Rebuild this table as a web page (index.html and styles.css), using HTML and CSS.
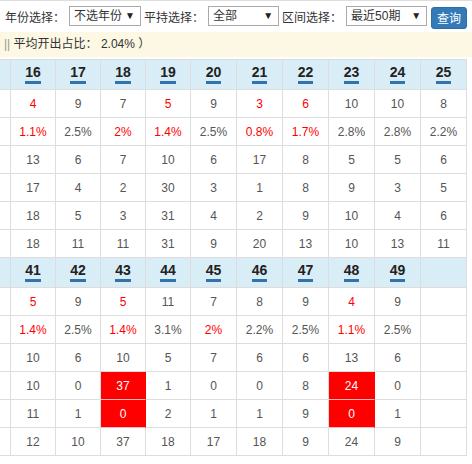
FILE: index.html
```html
<!DOCTYPE html>
<html lang="zh-CN">
<head>
    <meta charset="UTF-8">
    <meta name="viewport" content="width=device-width, initial-scale=1.0">
    <title>号码统计</title>
    <link rel="stylesheet" href="styles.css">
</head>
<body>
    <div class="page">
        <div class="toolbar">
            <label>年份选择：</label>
            <div class="select-wrap year">
                <select><option>不选年份</option></select>
                <span class="caret">▼</span>
            </div>
            <label>平持选择：</label>
            <div class="select-wrap type">
                <select><option>全部</option></select>
                <span class="caret">▼</span>
            </div>
            <label>区间选择：</label>
            <div class="select-wrap range">
                <select><option>最近50期</option></select>
                <span class="caret">▼</span>
            </div>
            <button class="btn-query">查询</button>
        </div>

        <div class="notice"><span class="bars">||</span> 平均开出占比： 2.04% ）</div>

        <div class="table-wrap">
            <table class="stats">
                <tbody>
                    <tr class="head">
                        <th class="c0"></th>
                        <th class="c45"><span class="num">16</span></th>
                        <th class="c45"><span class="num">17</span></th>
                        <th class="c45"><span class="num">18</span></th>
                        <th class="c45"><span class="num">19</span></th>
                        <th class="c46"><span class="num">20</span></th>
                        <th class="c46"><span class="num">21</span></th>
                        <th class="c46"><span class="num">22</span></th>
                        <th class="c46"><span class="num">23</span></th>
                        <th class="c46"><span class="num">24</span></th>
                        <th class="c46"><span class="num">25</span></th>
                    </tr>
                    <tr>
                        <td class="c0"></td>
                        <td class="red">4</td><td>9</td><td>7</td><td class="red">5</td><td>9</td>
                        <td class="red">3</td><td class="red">6</td><td>10</td><td>10</td><td>8</td>
                    </tr>
                    <tr>
                        <td class="c0"></td>
                        <td class="red">1.1%</td><td>2.5%</td><td class="red">2%</td><td class="red">1.4%</td><td>2.5%</td>
                        <td class="red">0.8%</td><td class="red">1.7%</td><td>2.8%</td><td>2.8%</td><td>2.2%</td>
                    </tr>
                    <tr>
                        <td class="c0"></td>
                        <td>13</td><td>6</td><td>7</td><td>10</td><td>6</td>
                        <td>17</td><td>8</td><td>5</td><td>5</td><td>6</td>
                    </tr>
                    <tr>
                        <td class="c0"></td>
                        <td>17</td><td>4</td><td>2</td><td>30</td><td>3</td>
                        <td>1</td><td>8</td><td>9</td><td>3</td><td>5</td>
                    </tr>
                    <tr>
                        <td class="c0"></td>
                        <td>18</td><td>5</td><td>3</td><td>31</td><td>4</td>
                        <td>2</td><td>9</td><td>10</td><td>4</td><td>6</td>
                    </tr>
                    <tr>
                        <td class="c0"></td>
                        <td>18</td><td>11</td><td>11</td><td>31</td><td>9</td>
                        <td>20</td><td>13</td><td>10</td><td>13</td><td>11</td>
                    </tr>
                </tbody>
                <tbody>
                    <tr class="head">
                        <th class="c0"></th>
                        <th><span class="num">41</span></th>
                        <th><span class="num">42</span></th>
                        <th><span class="num">43</span></th>
                        <th><span class="num">44</span></th>
                        <th><span class="num">45</span></th>
                        <th><span class="num">46</span></th>
                        <th><span class="num">47</span></th>
                        <th><span class="num">48</span></th>
                        <th><span class="num">49</span></th>
                        <th></th>
                    </tr>
                    <tr>
                        <td class="c0"></td>
                        <td class="red">5</td><td>9</td><td class="red">5</td><td>11</td><td>7</td>
                        <td>8</td><td>9</td><td class="red">4</td><td>9</td><td></td>
                    </tr>
                    <tr>
                        <td class="c0"></td>
                        <td class="red">1.4%</td><td>2.5%</td><td class="red">1.4%</td><td>3.1%</td><td class="red">2%</td>
                        <td>2.2%</td><td>2.5%</td><td class="red">1.1%</td><td>2.5%</td><td></td>
                    </tr>
                    <tr>
                        <td class="c0"></td>
                        <td>10</td><td>6</td><td>10</td><td>5</td><td>7</td>
                        <td>6</td><td>6</td><td>13</td><td>6</td><td></td>
                    </tr>
                    <tr>
                        <td class="c0"></td>
                        <td>10</td><td>0</td><td class="hot">37</td><td>1</td><td>0</td>
                        <td>0</td><td>8</td><td class="hot">24</td><td>0</td><td></td>
                    </tr>
                    <tr>
                        <td class="c0"></td>
                        <td>11</td><td>1</td><td class="hot">0</td><td>2</td><td>1</td>
                        <td>1</td><td>9</td><td class="hot">0</td><td>1</td><td></td>
                    </tr>
                    <tr>
                        <td class="c0"></td>
                        <td>12</td><td>10</td><td>37</td><td>18</td><td>17</td>
                        <td>18</td><td>9</td><td>24</td><td>9</td><td></td>
                    </tr>
                </tbody>
            </table>
        </div>
    </div>
</body>
</html>
```

FILE: styles.css
```css
* {
    margin: 0;
    padding: 0;
    box-sizing: border-box;
    font-family: "Liberation Sans", "Noto Sans CJK SC", sans-serif;
}
body {
    background: #fff;
    color: #333;
    font-size: 12px;
}
.page {
    border-top: 1px solid #ddd;
    width: 472px;
    overflow: hidden;
}

/* filter bar */
.toolbar {
    display: flex;
    align-items: center;
    height: 31px;
    padding-left: 5px;
}
.toolbar label {
    font-size: 12px;
    color: #333;
    margin-right: 4px;
}
.select-wrap {
    position: relative;
    height: 20px;
    margin-right: 3px;
    margin-top: -1px;
}
.select-wrap.year { width: 72px; }
.select-wrap.type { width: 71px; }
.select-wrap.range { width: 81px; }
.select-wrap select {
    appearance: none;
    -webkit-appearance: none;
    width: 100%;
    height: 100%;
    border: 1px solid #aaa;
    border-radius: 0;
    background: #fff;
    color: #333;
    font-size: 12px;
    padding: 0 0 0 4px;
    outline: none;
}
.caret {
    position: absolute;
    right: 6px;
    top: 4px;
    font-size: 10px;
    line-height: 12px;
    color: #222;
    pointer-events: none;
}
.btn-query {
    width: 36px;
    height: 22px;
    margin-left: 1px;
    margin-top: 2px;
    background: #337ab7;
    border: 1px solid #2e6da4;
    border-radius: 3px;
    color: #fff;
    font-size: 12px;
    cursor: pointer;
}

/* yellow info bar */
.notice {
    height: 25px;
    line-height: 25px;
    background: #fcf8e3;
    padding-left: 4px;
    font-size: 12px;
    color: #333;
    white-space: nowrap;
}
.notice .bars {
    color: #999;
}

/* stats table */
.table-wrap {
    margin-top: 2px;
}
.stats {
    border-collapse: separate;
    border-spacing: 0;
    table-layout: fixed;
    width: 467px;
    border-top: 1px solid #ddd;
}
.stats td,
.stats th {
    height: 28px;
    border-right: 1px solid #ddd;
    border-bottom: 1px solid #ddd;
    text-align: center;
    vertical-align: middle;
    font-size: 12px;
    font-weight: normal;
    color: #555;
    white-space: nowrap;
    overflow: hidden;
}
.stats .c0 { width: 11px; }
.stats .c45 { width: 45px; }
.stats .c46 { width: 46px; }
.stats .head th {
    height: 30px;
    background: #d9edf7;
    padding-bottom: 1px;
}
.num {
    display: inline-block;
    font-size: 14px;
    font-weight: bold;
    color: #222;
    line-height: 15px;
    padding-bottom: 1px;
    border-bottom: 3px solid #3272ad;
}
.stats td.red {
    color: #f00;
}
.stats td.hot {
    background: #f00;
    color: #fff;
    border-right-color: #f00;
    border-bottom-color: #fbb;
}
```
